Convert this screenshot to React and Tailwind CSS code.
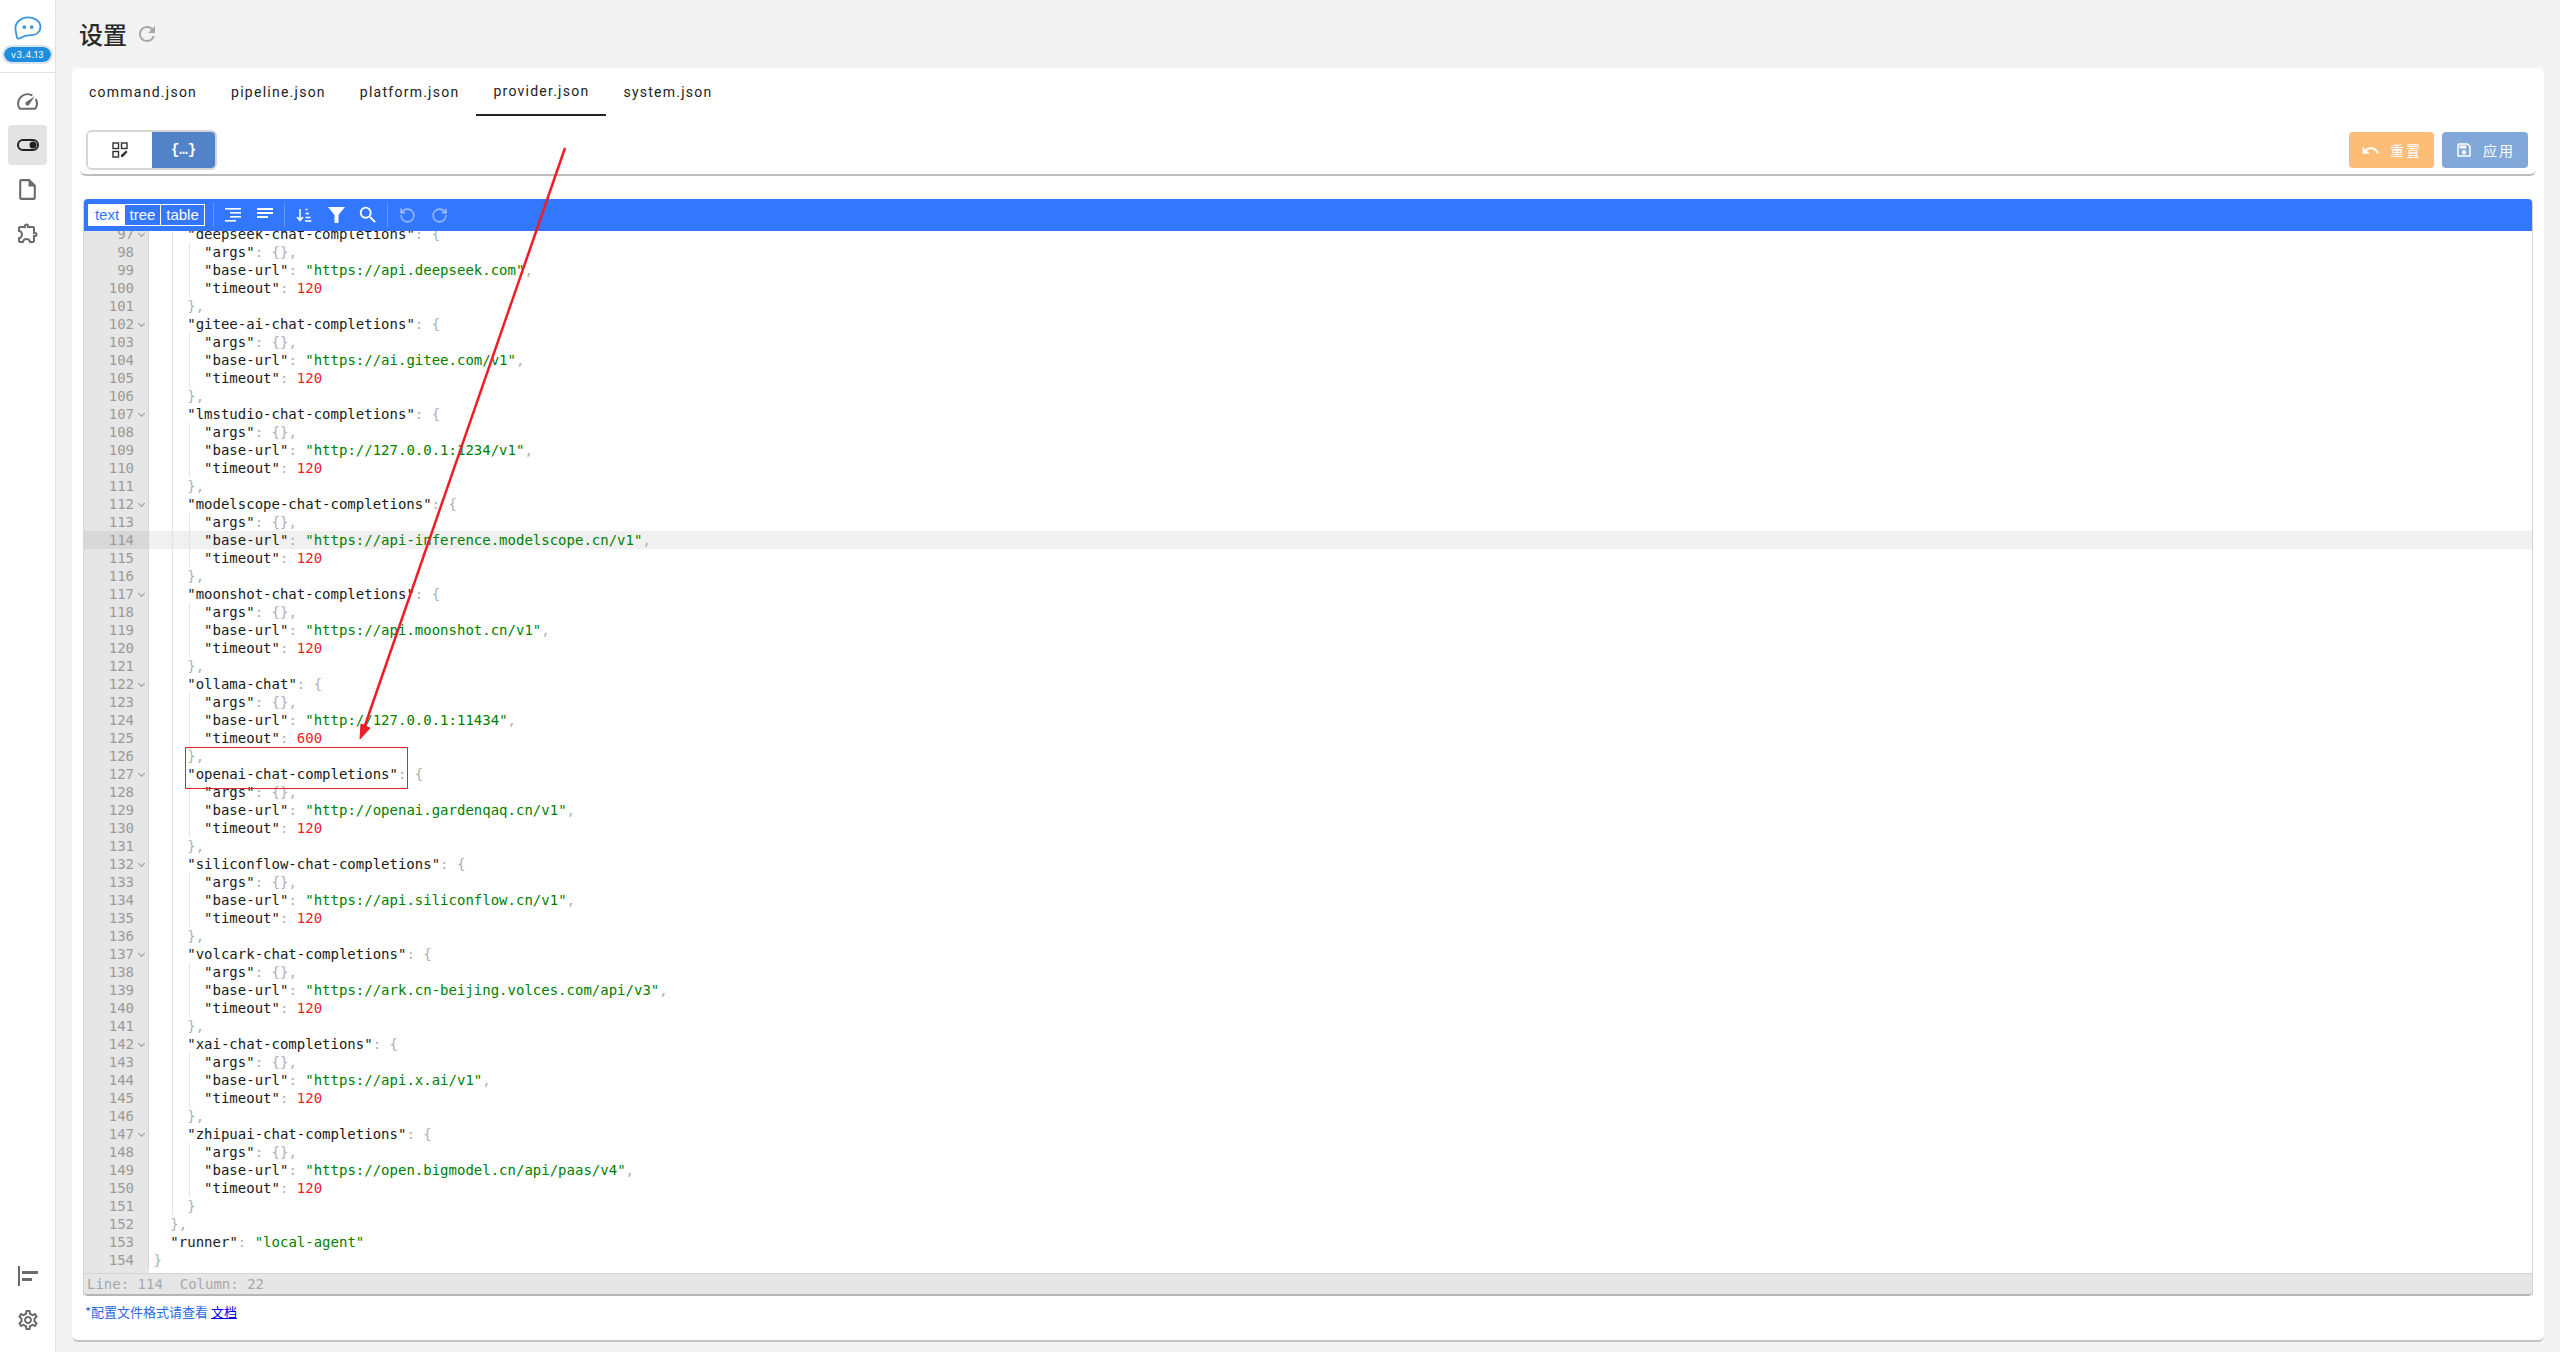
import React from 'react';
import { RotateCcw, RotateCw } from 'lucide-react';
import { MdSpeed, MdOutlineInsertDriveFile, MdOutlineExtension, MdOutlineSettings, MdUndo, MdOutlineSave, MdRefresh, MdSearch } from 'react-icons/md';

const providers = [
    ['deepseek-chat-completions', 'https://api.deepseek.com', 120],
    ['gitee-ai-chat-completions', 'https://ai.gitee.com/v1', 120],
    ['lmstudio-chat-completions', 'http://127.0.0.1:1234/v1', 120],
    ['modelscope-chat-completions', 'https://api-inference.modelscope.cn/v1', 120],
    ['moonshot-chat-completions', 'https://api.moonshot.cn/v1', 120],
    ['ollama-chat', 'http://127.0.0.1:11434', 600],
    ['openai-chat-completions', 'http://openai.gardenqaq.cn/v1', 120],
    ['siliconflow-chat-completions', 'https://api.siliconflow.cn/v1', 120],
    ['volcark-chat-completions', 'https://ark.cn-beijing.volces.com/api/v3', 120],
    ['xai-chat-completions', 'https://api.x.ai/v1', 120],
    ['zhipuai-chat-completions', 'https://open.bigmodel.cn/api/paas/v4', 120],
];

const Key = ({ children }) => <span className="text-[#1a1a1a]">"{children}"</span>;
const Punct = ({ children }) => <span className="text-[#b0b0b0]">{children}</span>;
const Str = ({ children }) => <span className="text-[#008000]">"{children}"</span>;
const Num = ({ children }) => <span className="text-[#ee2222]">{children}</span>;

// one entry per editor line: indent depth, fold marker, content
const buildLines = () => {
    const lines = [];
    providers.forEach(([name, url, timeout], i) => {
        lines.push({ depth: 2, fold: true, body: <><Key>{name}</Key><Punct>: {'{'}</Punct></> });
        lines.push({ depth: 3, body: <><Key>args</Key><Punct>: {'{},'}</Punct></> });
        lines.push({ depth: 3, body: <><Key>base-url</Key><Punct>: </Punct><Str>{url}</Str><Punct>,</Punct></> });
        lines.push({ depth: 3, body: <><Key>timeout</Key><Punct>: </Punct><Num>{timeout}</Num></> });
        lines.push({ depth: 2, body: <Punct>{i === providers.length - 1 ? '}' : '},'}</Punct> });
    });
    lines.push({ depth: 1, body: <Punct>{'},'}</Punct> });
    lines.push({ depth: 1, body: <><Key>runner</Key><Punct>: </Punct><Str>local-agent</Str></> });
    lines.push({ depth: 0, body: <Punct>{'}'}</Punct> });
    return lines.map((line, i) => ({ ...line, no: 97 + i }));
};

const ToggleIcon = () => (
    <svg width="24" height="24" viewBox="0 0 24 24" fill="none">
        <rect x="2" y="7" width="20" height="10" rx="5" stroke="#222" strokeWidth="2" />
        <circle cx="17" cy="12" r="3.5" fill="#222" />
    </svg>
);

const Logo = () => (
    <svg width="28" height="24" viewBox="0 0 30 26" fill="none">
        <path d="M3 23 C2 18 1 15 1.5 11 C3 5 9 1.5 15 1.5 C23 1.5 28.5 6 28.5 12 C28.5 18 23 21 16 21 C13 21 11 21 8.5 23 C6.5 24.5 3.5 25.5 3 23 Z" stroke="#3f97e0" strokeWidth="2" strokeLinejoin="round" />
        <circle cx="11" cy="12" r="2.1" fill="#3f97e0" />
        <circle cx="19" cy="12" r="2.1" fill="#3f97e0" />
    </svg>
);

const CollapseIcon = () => (
    <svg width="22" height="22" viewBox="0 0 22 22" fill="#6b6b6b">
        <rect x="1" y="1" width="2" height="20" />
        <rect x="5" y="6" width="16" height="3" />
        <rect x="5" y="13" width="10" height="3" />
    </svg>
);

const FormIcon = () => (
    <svg width="16" height="16" viewBox="0 0 16 16" fill="none" stroke="#333" strokeWidth="1.4">
        <rect x="1" y="1" width="5.5" height="5.5" />
        <rect x="9.5" y="1" width="5.5" height="5.5" />
        <rect x="1" y="9.5" width="5.5" height="5.5" />
        <path d="M9 15 L9 13 L14 8.5 L15.5 10 L11 15 Z" fill="#333" stroke="none" />
    </svg>
);

const FormatIcon = () => (
    <svg width="16" height="14" viewBox="0 0 16 14" fill="white">
        <rect x="0" y="0" width="16" height="1.6" />
        <rect x="5" y="4" width="11" height="1.6" />
        <rect x="5" y="8" width="11" height="1.6" />
        <rect x="0" y="12" width="11" height="1.6" />
    </svg>
);

const CompactIcon = () => (
    <svg width="16" height="14" viewBox="0 0 16 14" fill="white" className="-mt-[3px]">
        <rect x="0" y="1" width="16" height="2" />
        <rect x="0" y="5" width="16" height="2" />
        <rect x="0" y="9" width="11" height="2" />
    </svg>
);

const SortIcon = () => (
    <svg width="16" height="14" viewBox="0 0 16 14" fill="none" stroke="white" strokeWidth="1.5">
        <path d="M4 1 V12 M1 9 L4 12.5 L7 9" />
        <path d="M9.5 1.5 H11.5 M9.5 5.5 H13 M9.5 9.5 H14.5 M9 13 H15.5" />
    </svg>
);

const FunnelIcon = () => (
    <svg width="17" height="16" viewBox="0 0 17 16" fill="white">
        <path d="M0 0 H17 L10.5 8 V16 H6.5 V8 Z" />
    </svg>
);

const SideItem = ({ active, children }) => (
    <div className={`w-[39px] h-[40px] rounded flex items-center justify-center ${active ? 'bg-[#e3e3e3]' : ''}`}>
        {children}
    </div>
);

const Sidebar = () => (
    <aside className="w-[56px] shrink-0 bg-white border-r border-[#e2e2e2] flex flex-col items-center">
        <div className="w-full h-[73px] border-b border-[#e2e2e2] flex flex-col items-center pt-[16px]">
            <Logo />
            <span className="mt-[7px] h-[15px] px-[7px] rounded-full bg-[#1e8ee0] outline-2 outline-[#d9e3ea] text-white text-[9px] leading-[15px] tracking-[0.5px] font-['Inter',sans-serif]">v3.4.13</span>
        </div>
        <div className="flex flex-col items-center gap-[4px] pt-[8px]">
            <SideItem><MdSpeed size={25} color="#6b6b6b" /></SideItem>
            <SideItem active><ToggleIcon /></SideItem>
            <SideItem><MdOutlineInsertDriveFile size={25} color="#6b6b6b" /></SideItem>
            <SideItem><MdOutlineExtension size={24} color="#6b6b6b" /></SideItem>
        </div>
        <div className="mt-auto flex flex-col items-center gap-[4px] pb-[12px]">
            <SideItem><CollapseIcon /></SideItem>
            <SideItem><MdOutlineSettings size={24} color="#6b6b6b" /></SideItem>
        </div>
    </aside>
);

const tabs = ['command.json', 'pipeline.json', 'platform.json', 'provider.json', 'system.json'];

const Tabs = () => (
    <div className="flex h-[48px] font-['Roboto',sans-serif]">
        {tabs.map((t) => (
            <div key={t} className={`px-[17px] flex items-center text-[14px] font-normal tracking-[1.25px] text-[#222] ${t === 'provider.json' ? 'border-b-2 border-[#222]' : ''}`}>
                {t}
            </div>
        ))}
    </div>
);

const ActionBar = () => (
    <div className="mx-[8px] mt-[8px] h-[52px] bg-white rounded-[6px] border-b-2 border-[#bdbdbd] flex items-center justify-between pt-[2px] pl-[6px] pr-[8px]">
        <div className="flex h-[40px] w-[131px] rounded-[6px] border-2 border-[#d6d6d6] overflow-hidden">
            <div className="w-[64px] flex items-center justify-center bg-white"><FormIcon /></div>
            <div className="flex-1 flex items-center justify-center bg-[#5283c8] text-white text-[14px] font-bold font-['Liberation_Mono',monospace]">{'{…}'}</div>
        </div>
        <div className="flex gap-[8px] text-white text-[14px] font-['Noto_Sans_CJK_SC',sans-serif]">
            <div className="w-[85px] h-[36px] rounded-[4px] bg-[#fdbd77] flex items-center justify-center gap-[10px]">
                <MdUndo size={19} />
                <span className="tracking-[2px]">重置</span>
            </div>
            <div className="w-[86px] h-[36px] rounded-[4px] bg-[#82a8da] flex items-center justify-center gap-[10px]">
                <MdOutlineSave size={18} />
                <span className="tracking-[2px]">应用</span>
            </div>
        </div>
    </div>
);

const ToolSep = () => <div className="w-px h-[24px] mx-[3px] bg-white/25" />;

const ToolButton = ({ children }) => <div className="w-[32px] flex justify-center">{children}</div>;

const EditorToolbar = () => (
    <div className="h-[32px] shrink-0 bg-[#3377ff] rounded-t-[4px] flex items-center pl-[4px] text-white">
        <div className="flex h-[22px] w-[117px] border border-white text-[15px] font-['Liberation_Sans',sans-serif]">
            <span className="w-[36px] bg-white text-[#3377ff] flex items-center justify-center">text</span>
            <span className="w-[36px] border-r border-white flex items-center justify-center">tree</span>
            <span className="flex-1 flex items-center justify-center">table</span>
        </div>
        <div className="w-[5px]" />
        <ToolSep />
        <ToolButton><FormatIcon /></ToolButton>
        <ToolButton><CompactIcon /></ToolButton>
        <ToolSep />
        <ToolButton><SortIcon /></ToolButton>
        <ToolButton><FunnelIcon /></ToolButton>
        <ToolButton><MdSearch size={22} /></ToolButton>
        <ToolSep />
        <ToolButton><RotateCcw size={17} strokeWidth={2.2} className="opacity-50" /></ToolButton>
        <ToolButton><RotateCw size={17} strokeWidth={2.2} className="opacity-50" /></ToolButton>
    </div>
);

const CodeLine = ({ line }) => (
    <div className={`flex h-[18px] shrink-0 ${line.no === 114 ? 'bg-[#f0f0f0]' : ''}`}>
        <div className={`relative w-[65px] shrink-0 border-r border-[#d4d4d4] pr-[14px] text-right text-[#9a9a9a] ${line.no === 114 ? 'bg-[#d8d8d8]' : 'bg-[#e6e6e6]'}`}>
            {line.no}
            {line.fold && <span className="absolute right-[4px] top-[6px] w-[5px] h-[5px] rotate-45 border-r border-b border-[#9a9a9a]" />}
        </div>
        <div className="flex pl-[4.5px] whitespace-pre">
            {Array.from({ length: line.depth }).map((_, i) => (
                <span key={i} className="w-[16.86px] shrink-0">
                    {i > 0 && <span className="block h-full ml-[2px] border-l border-[#e4e4e4]" />}
                </span>
            ))}
            <span>{line.body}</span>
        </div>
    </div>
);

const Editor = () => (
    <div className="mx-[11px] mt-[23px] flex-1 min-h-0 flex flex-col border-x border-[#d4d4d4] rounded-t-[4px] font-['DejaVu_Sans_Mono',monospace] text-[14px] leading-[18px]">
        <EditorToolbar />
        <div className="flex-1 min-h-0 overflow-hidden flex flex-col justify-end pb-[4px] bg-[linear-gradient(to_right,#e6e6e6_65px,white_65px)]">
            {buildLines().map((line) => <CodeLine key={line.no} line={line} />)}
        </div>
        <div className="h-[23px] shrink-0 bg-[#e6e6e6] border-t border-[#d4d4d4] border-b-2 border-b-[#b5b5b5] rounded-b-[4px] pl-[3px] text-[#a8a8a8] text-[14px] leading-[20px] whitespace-pre">
            Line: 114  Column: 22
        </div>
    </div>
);

export default function App() {
    return (
        <div className="relative flex w-full h-[1352px] overflow-hidden bg-[#f3f3f3]">
            <Sidebar />
            <main className="flex-1 min-w-0 flex flex-col pl-[16px] pr-[16px] pb-[10px]">
                <div className="h-[68px] shrink-0 flex items-center gap-[8px] pl-[7px] font-['Noto_Sans_CJK_SC',sans-serif]">
                    <span className="text-[24px] font-medium text-[#2a2a2a]">设置</span>
                    <MdRefresh size={24} color="#a8a8a8" />
                </div>
                <div className="flex-1 min-h-0 flex flex-col bg-white rounded-[6px] border-b-2 border-[#c4c4c4]">
                    <Tabs />
                    <ActionBar />
                    <Editor />
                    <div className="h-[44px] shrink-0 pl-[13px] pt-[6px] text-[13px] text-[#2c68e0] font-['Noto_Sans_CJK_SC',sans-serif]">
                        *配置文件格式请查看 <a className="underline text-[#0000ee]" href="#docs">文档</a>
                    </div>
                </div>
            </main>

            {/* annotation drawn on the screenshot */}
            <svg className="absolute left-0 top-0 pointer-events-none" width="2560" height="1352" fill="none">
                <path d="M565 148 L362 734" stroke="#ee1c25" strokeWidth="2.5" />
                <path d="M360 739 L361 724 L370 728 Z" fill="#ee1c25" stroke="#ee1c25" />
            </svg>
            <div className="absolute left-[185px] top-[747px] w-[223px] h-[42px] border border-[#e8202a]" />
        </div>
    );
}
